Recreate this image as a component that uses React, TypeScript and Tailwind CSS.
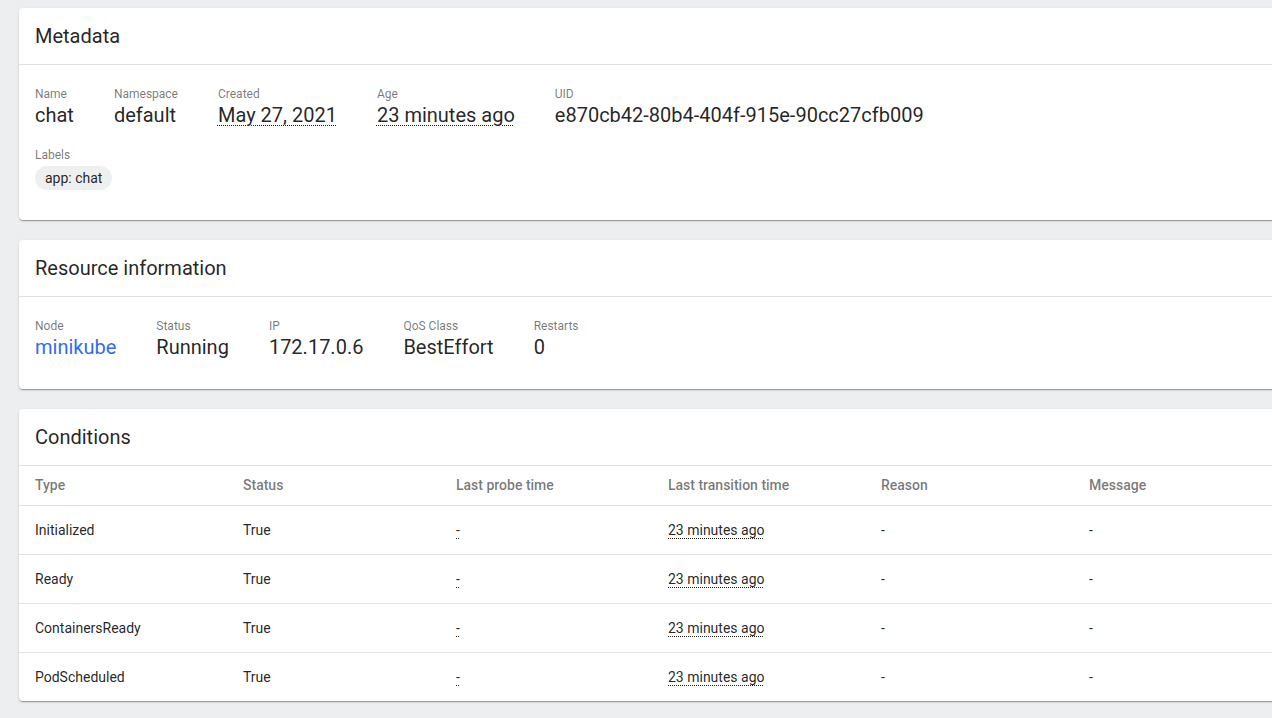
import React from "react";

const font = { fontFamily: "Roboto, 'Noto Sans', sans-serif" };

function Card({ title, children }: { title: string; children: React.ReactNode }) {
  return (
    <div className="w-[1290px] shrink-0 rounded-[4px] bg-white shadow-[0_2px_1px_-1px_rgba(0,0,0,0.2),0_1px_1px_0_rgba(0,0,0,0.14),0_1px_3px_0_rgba(0,0,0,0.12)]">
      <div className="flex h-[57px] items-center border-b border-[#e0e0e0] px-4 text-[20px] text-[rgba(0,0,0,0.87)]">
        {title}
      </div>
      {children}
    </div>
  );
}

function Prop({ label, children }: { label: string; children: React.ReactNode }) {
  return (
    <div className="flex flex-col">
      <div className="text-[12px] leading-4 text-[rgba(0,0,0,0.54)]">{label}</div>
      <div className="text-[20px] leading-[26px] text-[rgba(0,0,0,0.87)]">{children}</div>
    </div>
  );
}

const Dotted = ({ children }: { children: React.ReactNode }) => (
  <span className="underline decoration-dotted decoration-1 underline-offset-[3px]">{children}</span>
);

const rows = ["Initialized", "Ready", "ContainersReady", "PodScheduled"];

export default function App() {
  return (
    <div className="h-[718px] w-[1272px] overflow-hidden bg-[#edeef0]" style={font}>
      <div className="flex flex-col gap-5 pl-[19px] pt-2">
        <Card title="Metadata">
          <div className="px-4 pb-[30px] pt-[21px]">
            <div className="flex gap-10">
              <Prop label="Name">chat</Prop>
              <Prop label="Namespace">default</Prop>
              <Prop label="Created"><Dotted>May 27, 2021</Dotted></Prop>
              <Prop label="Age"><Dotted>23 minutes ago</Dotted></Prop>
              <Prop label="UID">e870cb42-80b4-404f-915e-90cc27cfb009</Prop>
            </div>
            <div className="mt-[19px] text-[12px] leading-4 text-[rgba(0,0,0,0.54)]">Labels</div>
            <div className="mt-[3px] flex">
              <span className="flex h-6 items-center rounded-full bg-[#efefef] px-[10px] text-[14px] text-[rgba(0,0,0,0.87)]">
                app: chat
              </span>
            </div>
          </div>
        </Card>
        <Card title="Resource information">
          <div className="px-4 pb-[29px] pt-[21px]">
            <div className="flex gap-10">
              <Prop label="Node"><span className="text-[#326de6]">minikube</span></Prop>
              <Prop label="Status">Running</Prop>
              <Prop label="IP">172.17.0.6</Prop>
              <Prop label="QoS Class">BestEffort</Prop>
              <Prop label="Restarts">0</Prop>
            </div>
          </div>
        </Card>
        <Card title="Conditions">
          <div className="text-[14px]">
            <div className="grid h-10 grid-cols-[208px_213px_212px_213px_208px_1fr] items-center border-b border-[#e0e0e0] font-medium text-[rgba(0,0,0,0.54)]">
              <div className="pl-4">Type</div>
              <div className="pl-4">Status</div>
              <div className="pl-4">Last probe time</div>
              <div className="pl-4">Last transition time</div>
              <div className="pl-4">Reason</div>
              <div className="pl-4">Message</div>
            </div>
            {rows.map((r, i) => (
              <div
                key={r}
                className={`grid grid-cols-[208px_213px_212px_213px_208px_1fr] items-center text-[rgba(0,0,0,0.87)] ${i < rows.length - 1 ? "h-[49px] border-b border-[#e0e0e0]" : "h-[48px]"}`}
              >
                <div className="pl-4">{r}</div>
                <div className="pl-4">True</div>
                <div className="pl-4"><Dotted>-</Dotted></div>
                <div className="pl-4"><Dotted>23 minutes ago</Dotted></div>
                <div className="pl-4">-</div>
                <div className="pl-4">-</div>
              </div>
            ))}
          </div>
        </Card>
      </div>
    </div>
  );
}
